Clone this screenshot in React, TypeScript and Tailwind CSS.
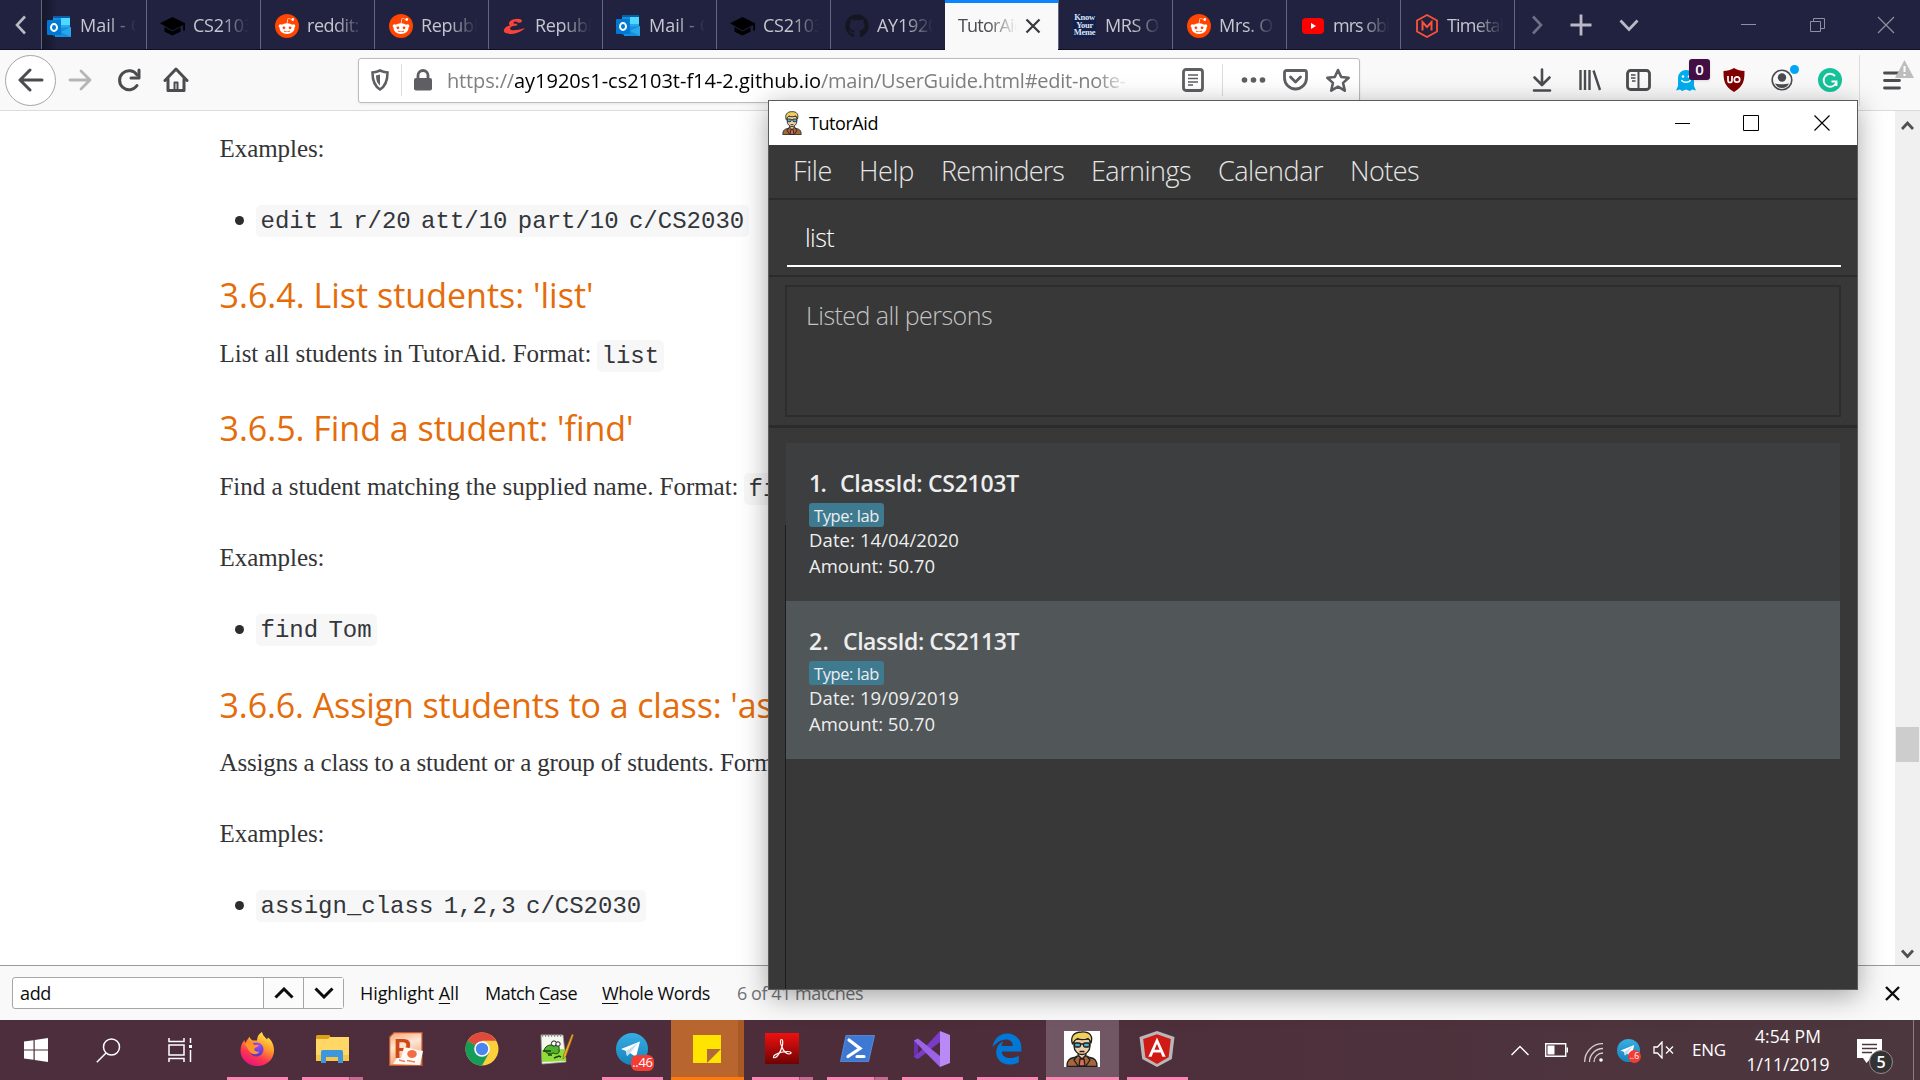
import { useLayoutEffect, useRef, type ReactNode } from "react";
import { FaRedditAlien, FaGithub, FaEdgeLegacy, FaAngular } from "react-icons/fa";

/* Text line whose letter spacing is adjusted so that it spans `w` pixels. */
function Fit({ w, className = "", children }: { w: number; className?: string; children: ReactNode }) {
  const ref = useRef<HTMLSpanElement>(null);
  useLayoutEffect(() => {
    const el = ref.current;
    if (!el) return;
    el.style.letterSpacing = "0px";
    const n = (el.textContent ?? "").length;
    el.style.letterSpacing = `${(w - el.getBoundingClientRect().width) / n}px`;
  }, [w]);
  return (
    <span ref={ref} className={`inline-block whitespace-pre ${className}`}>
      {children}
    </span>
  );
}

function Outlook() {
  return (
    <svg width="25" height="24" viewBox="0 0 25 24">
      <path d="M6 1h17v20H6z" fill="#0a5ea8" />
      <path d="M6 3h8v7H6z" fill="#1490df" />
      <path d="M14 3h9v7h-9z" fill="#50d9ff" />
      <path d="M14 10h9v6h-9z" fill="#28a8ea" />
      <path d="M8 13l16-1v10H8z" fill="#1490df" />
      <path d="M14 17l10-5v10z" fill="#28a8ea" />
      <rect y="5" width="14" height="15" rx="1" fill="#0078d4" />
      <ellipse cx="7" cy="12.5" rx="3" ry="3.4" fill="none" stroke="#fff" strokeWidth="2" />
    </svg>
  );
}

function Reddit() {
  return (
    <span className="flex size-6 items-center justify-center rounded-full bg-[#ff4500]">
      <FaRedditAlien size={18} color="#fff" />
    </span>
  );
}

function Meme() {
  return (
    <span className="flex h-6 w-[23px] flex-col items-center justify-center bg-[#12204c] font-['Liberation_Serif'] text-[8.500px] leading-[7.500px] font-bold tracking-[-0.3px] text-[#dfe3ee]">
      <span>Know</span>
      <span>Your</span>
      <span>Meme</span>
    </span>
  );
}

function YouTube() {
  return (
    <svg width="24" height="24" viewBox="0 0 24 24">
      <rect x="1" y="4" width="22" height="16" rx="4" fill="#f00" />
      <path d="M10 9l5 3-5 3z" fill="#fff" />
    </svg>
  );
}

function NusMods() {
  return (
    <svg width="24" height="24" viewBox="0 0 24 24" fill="none" stroke="#ff5138" strokeWidth="1.800">
      <path d="M12 1l10 5.500v11L12 23 2 17.500v-11z" />
      <path d="M7.500 16.500V8l4.500 5 4.500-5v8.500" strokeWidth="2" />
    </svg>
  );
}

function GradCap() {
  return (
    <svg width="25" height="20" viewBox="0 0 25 20" fill="#000">
      <path d="M12.500 1L25 7.200v7.300h-1.800V9l-10.700 5.600L0 7.200z" />
      <path d="M4.500 11l8 4.600 8-4.400v4.600l-8 3.600-8-3.600z" />
    </svg>
  );
}

function RedScript() {
  return (
    <svg width="23" height="16" viewBox="0 0 23 16" fill="#f9423a">
      <path d="M10 1.500C14 0 19 .5 19 3c0 1.500-2 2-4 1.500C13.500 3 11 3 10.500 4.500c-.3 1.200 1.500 1.500 4 1.200l-1 2c-4-.2-6.500 1-6.500 2.800 0 2.500 6 2.300 15-.5-4 4-10 6-15 6C2.500 16 0 14 1 11.500 2 9 4.500 8 7 7.500 4.500 5.500 6.500 3 10 1.500z" />
    </svg>
  );
}

const tabs: { icon: ReactNode; label: string; w: number }[] = [
  { icon: <GradCap />, label: "CS2103", w: 61 },
  { icon: <Reddit />, label: "reddit: t", w: 62 },
  { icon: <Reddit />, label: "Republ", w: 57 },
  { icon: <RedScript />, label: "Republ", w: 57 },
  { icon: <Outlook />, label: "Mail - C", w: 62 },
  { icon: <GradCap />, label: "CS2103", w: 61 },
  { icon: <FaGithub size={24} color="#15161f" />, label: "AY1920", w: 61 },
];
const tabsAfter: { icon: ReactNode; label: string; w: number }[] = [
  { icon: <Meme />, label: "MRS O", w: 54 },
  { icon: <Reddit />, label: "Mrs. O", w: 54 },
  { icon: <YouTube />, label: "mrs obb", w: 63 },
  { icon: <NusMods />, label: "Timetab", w: 63 },
];

function Tab({ icon, label, w }: { icon: ReactNode; label: string; w: number }) {
  return (
    <div className="flex h-[49px] w-[114px] shrink-0 items-center overflow-hidden border-l border-[#646580] pl-[13px]">
      <div className="flex w-[25px] shrink-0 justify-center pt-0.5">{icon}</div>
      <div className="ml-2 w-[56px] overflow-hidden mask-r-from-50% mask-r-to-100%">
        <Fit w={w} className="text-[18px] leading-[50px] text-[#c6c7d0]">{label}</Fit>
      </div>
    </div>
  );
}

function TabBar() {
  return (
    <div className="flex h-[50px] shrink-0 border-b border-[#0f1020] bg-[#20223f]">
      <div className="flex w-[41px] items-center justify-center">
        <svg width="14" height="20" viewBox="0 0 14 20" fill="none" stroke="#b9bac6" strokeWidth="2.600"><path d="M11 1.500L3 10l8 8.500" /></svg>
      </div>
      <div className="flex w-[105px] items-center border-l border-[#646580] bg-linear-to-r from-[#15172c] to-[#20223f] to-15% pl-[5px]">
        <div className="pt-1"><Outlook /></div>
        <div className="ml-2 w-[56px] overflow-hidden mask-r-from-50% mask-r-to-100%">
          <Fit w={62} className="text-[18px] leading-[50px] text-[#c6c7d0]">Mail - C</Fit>
        </div>
      </div>
      {tabs.map((t, i) => <Tab key={i} {...t} />)}
      <div className="ml-px flex h-[50px] w-[113px] shrink-0 items-center border-t-[3px] border-[#0a84ff] bg-[#f9f9fa] pl-[13px]">
        <div className="w-[59px] overflow-hidden mask-r-from-50% mask-r-to-100%">
          <Fit w={66} className="-mt-[3px] text-[18px] leading-[47px] text-[#4a4a4f]">TutorAid</Fit>
        </div>
        <svg className="-mt-px ml-2" width="16" height="16" viewBox="0 0 16 16" fill="none" stroke="#38383d" strokeWidth="2.200"><path d="M1.500 1.500l13 13M14.500 1.500l-13 13" /></svg>
      </div>
      {tabsAfter.map((t, i) => <Tab key={i} {...t} />)}
      <div className="flex h-[49px] flex-1 items-center border-l border-[#646580] text-[#b9bac6]">
        <svg className="ml-[15px]" width="14" height="20" viewBox="0 0 14 20" fill="none" stroke="#6f7088" strokeWidth="2.600"><path d="M3 1.500L11 10l-8 8.500" /></svg>
        <svg className="ml-[26px]" width="22" height="22" viewBox="0 0 22 22" fill="none" stroke="currentColor" strokeWidth="2.800"><path d="M11 0.500v21M0.500 11h21" /></svg>
        <svg className="ml-[27px]" width="20" height="14" viewBox="0 0 20 14" fill="none" stroke="currentColor" strokeWidth="2.800"><path d="M1.500 2.500L10 11.500l8.500-9" /></svg>
        <svg className="ml-[102px]" width="16" height="16" viewBox="0 0 16 16" stroke="#8f909f"><path d="M0 7.500h15" /></svg>
        <svg className="ml-[53px]" width="16" height="16" viewBox="0 0 16 16" fill="none" stroke="#8f909f"><path d="M.5 4.500h10v10h-10zM3.500 4.500v-3h11v10h-4" /></svg>
        <svg className="ml-[51px]" width="18" height="18" viewBox="0 0 18 18" fill="none" stroke="#8f909f" strokeWidth="1.200"><path d="M1 1l16 16M17 1L1 17" /></svg>
      </div>
    </div>
  );
}

function Toolbar() {
  return (
    <div className="flex h-[61px] shrink-0 items-center border-b border-[#dcdcdd] bg-[#f9f9fa]">
      <div className="ml-[5px] flex size-[51px] shrink-0 items-center justify-center rounded-full border border-[#a5a5a6] bg-white">
        <svg width="26" height="24" viewBox="0 0 26 24" fill="none" stroke="#4c4c50" strokeWidth="3" strokeLinecap="round" strokeLinejoin="round"><path d="M24 12H2M12 2L2 12l10 10" /></svg>
      </div>
      <svg className="ml-3 shrink-0" width="24" height="22" viewBox="0 0 24 22" fill="none" stroke="#b5b5b7" strokeWidth="2.800" strokeLinecap="round" strokeLinejoin="round"><path d="M2 11h20M13 2l9 9-9 9" /></svg>
      <svg className="ml-[25px] shrink-0" width="24" height="24" viewBox="0 0 24 24" fill="none" stroke="#4c4c50" strokeWidth="3" strokeLinecap="round"><path d="M20 17.500A9.500 9.500 0 1 1 20 7" /><path d="M22 2v8h-8" strokeLinejoin="round" /></svg>
      <svg className="ml-[22px] shrink-0" width="26" height="26" viewBox="0 0 26 26" fill="none" stroke="#4c4c50" strokeWidth="3" strokeLinecap="round" strokeLinejoin="round"><path d="M2 13.500L13 2l11 11.500" /><path d="M5 12v11.500h16V12" /><path d="M11.500 22v-6.500h3V22" strokeWidth="2" /></svg>
      <div className="ml-[169px] flex h-[45px] w-[1002px] shrink-0 items-center rounded-[3px] border border-[#bcbcbd] bg-white text-[#808084] shadow-[0_1px_3px_rgba(0,0,0,0.08)]">
        <svg className="ml-3" width="18" height="22" viewBox="0 0 18 22" fill="none" stroke="#5f5f63" strokeWidth="2.600"><path d="M9 1.500c2.500 1.200 5 1.700 7.500 2 0 7-1 13-7.500 17C2.500 16.500 1.500 10.500 1.500 3.500 4 3.200 6.500 2.700 9 1.500z" /><path d="M9 5.500v11c-3-2.500-3.800-5-4-10z" fill="#5f5f63" stroke="none" /></svg>
        <div className="ml-3 h-8 w-px bg-[#dcdcdd]" />
        <svg className="ml-3" width="18" height="22" viewBox="0 0 18 22"><rect y="9" width="18" height="12.500" rx="2" fill="#5f5f63" /><path d="M4 10V6.500a5 5 0 0 1 10 0V10" fill="none" stroke="#5f5f63" strokeWidth="2.800" /></svg>
        <div className="ml-[15px] flex w-[682px] pt-px text-[20px] leading-[42px] mask-r-from-[650px] mask-r-to-[682px]">
          <Fit w={67}>https://</Fit>
          <Fit w={307} className="text-black">ay1920s1-cs2103t-f14-2.github.io</Fit>
          <Fit w={305}>/main/UserGuide.html#edit-note-</Fit>
        </div>
        <svg className="ml-[53px]" width="22" height="24" viewBox="0 0 22 24" fill="none" stroke="#5f5f63"><rect x="1.500" y="1.500" width="19" height="21" rx="2.500" strokeWidth="2.800" /><path d="M6 7h10M6 10.500h10M6 14h10M6 17h5" strokeWidth="1.600" /></svg>
        <div className="ml-[18px] h-8 w-px bg-[#dcdcdd]" />
        <svg className="ml-[18px]" width="26" height="6" viewBox="0 0 26 6" fill="#5f5f63"><circle cx="3.500" cy="3" r="2.800" /><circle cx="12.500" cy="3" r="2.800" /><circle cx="21.500" cy="3" r="2.800" /></svg>
        <svg className="ml-4" width="25" height="22" viewBox="0 0 25 22" fill="none" stroke="#5f5f63" strokeWidth="2.800" strokeLinecap="round" strokeLinejoin="round"><path d="M3.500 1.500h18a2 2 0 0 1 2 2V9a11 11 0 0 1-22 0V3.500a2 2 0 0 1 2-2z" /><path d="M7.500 8l5 5 5-5" /></svg>
        <svg className="ml-[17px]" width="26" height="25" viewBox="0 0 26 25" fill="none" stroke="#5f5f63" strokeWidth="2.600" strokeLinejoin="round"><path d="M13 2l3.200 7 7.500.8-5.600 5.100 1.700 7.800L13 18.700l-6.800 4 1.700-7.800L2.300 9.800l7.500-.8z" /></svg>
      </div>
      <div className="ml-[158px] flex items-center text-[#4c4c50]">
        <div className="flex w-12 justify-center"><svg width="20" height="24" viewBox="0 0 20 24" fill="none" stroke="currentColor" strokeWidth="2.600" strokeLinecap="round" strokeLinejoin="round"><path d="M10 1.500v15M2.500 9.500L10 17l7.500-7.500M2 22.500h16" /></svg></div>
        <div className="flex w-12 justify-center"><svg width="24" height="22" viewBox="0 0 24 22" fill="none" stroke="currentColor" strokeWidth="2.400"><path d="M2.500 1v20M7 1v20M11.500 1v20M15.500 1.500L22 21" /></svg></div>
        <div className="flex w-12 justify-center"><svg width="25" height="22" viewBox="0 0 25 22" fill="none" stroke="currentColor" strokeWidth="2.800"><rect x="1.500" y="1.500" width="22" height="19" rx="3" /><path d="M12.500 2v18" strokeWidth="2" /><path d="M5 6h4.500M5 9h4.500M6 12h3.500" strokeWidth="1.600" /></svg></div>
        <div className="relative flex w-12 justify-center">
          <svg width="20" height="22" viewBox="0 0 20 22"><path d="M2 9a8 8 0 0 1 16 0v8l2 4.500-4-1-2 1.500-4-1.500L6 22l-2-1.500-4 1 2-4.500z" fill="#00aef0" /><circle cx="7" cy="7.500" r="1.300" fill="#fff" /><circle cx="13" cy="7.500" r="1.300" fill="#fff" /><path d="M5.500 11c1.500 3 7.500 3 9 0" stroke="#fff" strokeWidth="1.500" fill="none" /></svg>
          <span className="absolute -top-[10px] left-[27px] flex h-[21px] w-[21px] items-center justify-center rounded-[3px] bg-[#440f45] text-[15px] leading-none font-semibold text-white shadow">0</span>
        </div>
        <div className="flex w-12 justify-center">
          <svg width="22" height="24" viewBox="0 0 22 24"><path d="M11 0c3 2 7 3 10.500 3 0 9-.5 15-10.500 21C1 18 .5 12 .5 3 4 3 8 2 11 0z" fill="#800000" /><path d="M5 8v4.500a1.800 1.800 0 0 0 4 0V8" fill="none" stroke="#fff" strokeWidth="1.700" /><circle cx="14" cy="11.500" r="2.700" fill="none" stroke="#fff" strokeWidth="1.700" /></svg>
        </div>
        <div className="relative flex w-12 justify-center">
          <svg width="22" height="22" viewBox="0 0 22 22" fill="none"><circle cx="11" cy="11" r="9.800" stroke="currentColor" strokeWidth="1.600" /><circle cx="11" cy="8.500" r="4.200" fill="currentColor" /><path d="M4 14.500c4 1 10 1 14 0-1.500 3-4 4.500-7 4.500s-5.500-1.500-7-4.500z" fill="currentColor" /></svg>
          <span className="absolute -top-1 left-8 size-[9px] rounded-full bg-[#00a5f5]" />
        </div>
        <div className="flex w-12 justify-center">
          <svg width="24" height="24" viewBox="0 0 24 24" fill="none"><circle cx="12" cy="12" r="12" fill="#15c39a" /><path d="M17 8a6.500 6.500 0 1 0 1.500 5.500M13.500 13.500h5V18" stroke="#fff" strokeWidth="1.900" /></svg>
        </div>
      </div>
      <div className="ml-[5px] h-[51px] w-px bg-[#dcdcdd]" />
      <div className="relative ml-[23px] text-[#4c4c50]">
        <svg width="18" height="19" viewBox="0 0 18 19" stroke="currentColor" strokeWidth="2.800" strokeLinecap="round"><path d="M1.500 2h15M1.500 9.500h15M1.500 17h15" /></svg>
        <svg className="absolute -top-[11px] left-3" width="19" height="18" viewBox="0 0 19 18"><path d="M9.500 0L19 18H0z" fill="#bdbdbe" /><path d="M9.500 6v6M9.500 14v2" stroke="#fff" strokeWidth="2" /></svg>
      </div>
    </div>
  );
}

function Code({ children, className = "" }: { children: string; className?: string }) {
  return (
    <code className={`rounded-[5px] bg-[#f7f7f8] px-[5px] py-[2.500px] font-['Liberation_Mono',monospace] text-[24px] text-[#33363a] [word-spacing:-0.17em] ${className}`}>
      {children}
    </code>
  );
}

function Para({ w, children, code, className = "" }: { w: number; children: string; code?: string; className?: string }) {
  return (
    <p className={`h-10 leading-10 whitespace-nowrap ${className}`}>
      <Fit w={w}>{children}</Fit>
      {code && <Code className="ml-[5px]">{code}</Code>}
    </p>
  );
}

function Bullet({ children, className = "" }: { children: string; className?: string }) {
  return (
    <div className={`h-10 leading-10 whitespace-nowrap ${className}`}>
      <span className="mr-[12px] mb-[2px] ml-[15px] inline-block size-[9px] rounded-full bg-[#2b2d30]" />
      <Code>{children}</Code>
    </div>
  );
}

function Heading({ w, children, className = "" }: { w: number; children: string; className?: string }) {
  return (
    <h3 className={`h-12 font-['Open_Sans',sans-serif] text-[34px] leading-[48px] whitespace-nowrap text-[#e46c0a] ${className}`}>
      <Fit w={w}>{children}</Fit>
    </h3>
  );
}

function Guide() {
  return (
    <div className="flex min-h-0 flex-1 bg-white">
      <div className="w-[770px] overflow-hidden pl-[219.500px] font-['Liberation_Serif',serif] text-[25px] text-[#333436]">
        <Para w={105} className="mt-[18px]">Examples:</Para>
        <Bullet className="mt-[30px]">edit 1 r/20 att/10 part/10 c/CS2030</Bullet>
        <Heading w={374} className="mt-[32px]">3.6.4. List students: 'list'</Heading>
        <Para w={372} code="list" className="mt-[15px]">List all students in TutorAid. Format:</Para>
        <Heading w={414} className="mt-[30px]">3.6.5. Find a student: 'find'</Heading>
        <Para w={519} code="find" className="mt-[15px]">Find a student matching the supplied name. Format:</Para>
        <Para w={105} className="mt-[31px]">Examples:</Para>
        <Bullet className="mt-[30px]">find Tom</Bullet>
        <Heading w={553} className="mt-[33px]">3.6.6. Assign students to a class: 'as</Heading>
        <Para w={554} className="mt-[14px]">Assigns a class to a student or a group of students. Form</Para>
        <Para w={105} className="mt-[31px]">Examples:</Para>
        <Bullet className="mt-[30px]">assign_class 1,2,3 c/CS2030</Bullet>
      </div>
      <div className="ml-auto flex w-[25px] flex-col items-center bg-[#f0f0f0] pt-[9px] pb-[5px]">
        <svg width="13" height="12" viewBox="0 0 13 12" fill="none" stroke="#505050" strokeWidth="2.800"><path d="M1 9L6.500 3 12 9" /></svg>
        <div className="mt-[595px] h-[35px] w-[23px] bg-[#cdcdcd]" />
        <svg className="mt-auto" width="13" height="12" viewBox="0 0 13 12" fill="none" stroke="#505050" strokeWidth="2.800"><path d="M1 2.500L6.500 8.500 12 2.500" /></svg>
      </div>
    </div>
  );
}

function FindBar() {
  return (
    <div className="flex h-[55px] shrink-0 items-center border-t border-[#9b9b9b] bg-[#f9f9fa] text-[18px] text-[#0c0c0d]">
      <div className="ml-3 flex h-8 w-[332px] items-stretch rounded-[3px] border border-[#a6a6a7] bg-white">
        <div className="flex w-[250px] items-center pl-[7px]"><Fit w={31}>add</Fit></div>
        <div className="flex w-10 items-center justify-center border-l border-[#a6a6a7] bg-[#fbfbfb]"><svg width="20" height="12" viewBox="0 0 20 12" fill="none" stroke="#0c0c0d" strokeWidth="3"><path d="M1.500 10.500L10 2l8.500 8.500" /></svg></div>
        <div className="flex flex-1 items-center justify-center border-l border-[#a6a6a7] bg-[#fbfbfb]"><svg width="20" height="12" viewBox="0 0 20 12" fill="none" stroke="#0c0c0d" strokeWidth="3"><path d="M1.500 1.500L10 10l8.500-8.500" /></svg></div>
      </div>
      <Fit w={99} className="ml-[16px]">Highlight <u className="underline-offset-[3px]">A</u>ll</Fit>
      <Fit w={92} className="ml-[26px]">Match <u className="underline-offset-[3px]">C</u>ase</Fit>
      <Fit w={108} className="ml-[25px]"><u className="underline-offset-[3px]">W</u>hole Words</Fit>
      <Fit w={126} className="ml-[27px] text-[#737375]">6 of 41 matches</Fit>
      <svg className="mr-5 ml-auto" width="15" height="15" viewBox="0 0 15 15" stroke="#0c0c0d" strokeWidth="2.400"><path d="M1 1l13 13M14 1L1 14" /></svg>
    </div>
  );
}

function Tutor({ width, height }: { width: number; height: number }) {
  return (
    <svg width={width} height={height} viewBox="0 0 36 36" stroke="#1d1d1d" strokeWidth="1.300" strokeLinejoin="round" preserveAspectRatio="none">
      <path d="M3 35.500c0-6 2-8 7-9l5-2h6l5 2c5 1 7 3 7 9z" fill="#a5673a" />
      <path d="M14 24l4 4 4-4-1-4h-6z" fill="#f2cfa6" />
      <path d="M16 28h4l1 7h-6z" fill="#e0695a" />
      <path d="M13 25l-3 4 4 6M23 25l3 4-4 6" fill="none" />
      <path d="M10 8v7c0 5 4 8.500 8 8.500s8-3.500 8-8.500V8z" fill="#f2cfa6" />
      <path d="M8.500 13c-2.500-7 1-12 9-12 9-.5 11.500 4.500 9.500 11-1-3-2-4-3-4.500-4 1.500-8 1.500-10.500 0-2 1-4 2.500-5 5.500z" fill="#f0cf5f" />
      <rect x="10.500" y="12" width="6" height="4" rx="1.500" fill="#3fb8cf" />
      <rect x="19.500" y="12" width="6" height="4" rx="1.500" fill="#3fb8cf" />
      <path d="M16.500 13h3M15.500 20.500h5" />
    </svg>
  );
}

function ClassCard({ index, id, idW, date, className }: { index: string; id: string; idW: number; date: string; className: string }) {
  return (
    <div className={`h-[158px] pt-[23px] pl-[23px] text-[#eeeeee] ${className}`}>
      <div className="flex h-[34px] text-[23px] leading-[34px] font-semibold">
        <Fit w={index === "1." ? 16 : 20}>{index}</Fit>
        <Fit w={idW} className={index === "1." ? "ml-[15px]" : "ml-[14px]"}>{id}</Fit>
      </div>
      <div className="mt-[3px] flex h-6 w-[75px] items-center justify-center rounded-[3px] bg-[#3e7b91] pt-[3px] text-[16.500px]">
        <Fit w={65}>Type: lab</Fit>
      </div>
      <div className="h-[26px] pt-px text-[18.500px] leading-[24px]"><Fit w={150}>{date}</Fit></div>
      <div className="h-[26px] pt-px text-[18.500px] leading-[24px]"><Fit w={126}>Amount: 50.70</Fit></div>
    </div>
  );
}

const menus = [
  { label: "File", w: 39 },
  { label: "Help", w: 55 },
  { label: "Reminders", w: 123 },
  { label: "Earnings", w: 100 },
  { label: "Calendar", w: 105 },
  { label: "Notes", w: 69 },
];

function TutorAidWindow() {
  return (
    <div className="absolute top-[100px] left-[768px] flex h-[890px] w-[1090px] flex-col border border-[#5b5b5b] bg-[#383838] shadow-[0_6px_26px_rgba(0,0,0,0.35)]">
      <div className="flex h-11 shrink-0 items-center bg-white text-black">
        <div className="ml-[12px]"><Tutor width={22} height={24} /></div>
        <Fit w={69} className="ml-[6px] text-[18px]">TutorAid</Fit>
        <svg className="mr-[53px] ml-auto" width="15" height="15" viewBox="0 0 15 15" stroke="#000"><path d="M0 7.500h15" /></svg>
        <svg className="mr-[55px]" width="16" height="16" viewBox="0 0 16 16" fill="none" stroke="#000"><path d="M.5.500h15v15H.5z" /></svg>
        <svg className="mr-[27px]" width="16" height="16" viewBox="0 0 16 16" stroke="#000" strokeWidth="1.200"><path d="M.5.500l15 15M15.500.500l-15 15" /></svg>
      </div>
      <div className="flex h-[53px] shrink-0 gap-[27px] pl-[24px] text-[27px] leading-[52px] font-light text-[#e6e6e6]">
        {menus.map((m) => <Fit key={m.label} w={m.w}>{m.label}</Fit>)}
      </div>
      <div className="h-[77px] shrink-0 border-t-2 border-[#2c2c2c] pt-[14px] pr-[16px] pl-[18px]">
        <div className="h-[53px] border-b-2 border-white pl-[18px] text-[25px] leading-[46px] font-light text-white">
          <Fit w={29}>list</Fit>
        </div>
      </div>
      <div className="h-[150px] shrink-0 border-t-2 border-[#2b2b2b] px-[16px] pt-[8px]">
        <div className="h-[132px] border-2 border-[#2d2d2d] pt-[8px] pl-[19px] text-[25px] leading-[40px] font-light text-[#c4c4c4]">
          <Fit w={186}>Listed all persons</Fit>
        </div>
      </div>
      <div className="flex min-h-0 flex-1 border-t-[3px] border-[#2b2b2b]">
        <div className="mt-[97px] ml-4 w-px bg-[#1d1d1d]" />
        <div className="mt-[15px] mr-[17px] flex-1">
          <ClassCard index="1." id="ClassId: CS2103T" idW={179} date="Date: 14/04/2020" className="bg-[#3c3e3f]" />
          <ClassCard index="2." id="ClassId: CS2113T" idW={176} date="Date: 19/09/2019" className="bg-[#515658]" />
        </div>
      </div>
    </div>
  );
}

function Firefox() {
  return (
    <svg width="34" height="34" viewBox="0 0 34 34">
      <defs>
        <linearGradient id="fx" x1="0.800" y1="0" x2="0.300" y2="1"><stop offset="0" stopColor="#fff44f" /><stop offset="0.400" stopColor="#ff9a2a" /><stop offset="0.700" stopColor="#ff3750" /><stop offset="1" stopColor="#e5137f" /></linearGradient>
        <radialGradient id="fp" cx="0.600" cy="0.200" r="0.800"><stop offset="0" stopColor="#a04bff" /><stop offset="1" stopColor="#4a3bc4" /></radialGradient>
      </defs>
      <path d="M22 0c1 4 3 5 5 7.500l1-2c4 3 6 8 6 13C34 27 27 34 17.500 34S.5 27 .5 19c0-5 1.500-8 4-11 0 1.500.5 2 1 3 1-3 3-4.500 4-6.500.5 2 2 3.500 3.500 4h4c0-4 2-7 5-8.500z" fill="url(#fx)" />
      <circle cx="16.500" cy="17.500" r="7" fill="url(#fp)" />
      <path d="M5 12c4-3 8-1 9 1h5c-1 2-4 2.500-4.500 3.500-1 2 2 4 5 3-1 3-7 4-10 0-2-2.500-2.500-5-4.500-7.500z" fill="#ff9428" />
    </svg>
  );
}

function Explorer() {
  return (
    <svg width="33" height="28" viewBox="0 0 33 28">
      <path d="M0 1.500A1.500 1.500 0 0 1 1.500 0h12L15 3l-2 3H0z" fill="#e0a015" />
      <path d="M0 4h12l2-2h19v24H0z" fill="#ffd767" />
      <path d="M0 20h33v6H0z" fill="#f6c64b" />
      <path d="M5 28V17a2 2 0 0 1 2-2h18a2 2 0 0 1 2 2v11h-5v-6H10v6z" fill="#3d97dd" />
    </svg>
  );
}

function PowerPoint() {
  return (
    <svg width="35" height="34" viewBox="0 0 35 34">
      <defs><linearGradient id="pp" x2="0.300" y2="1"><stop stopColor="#f5a878" /><stop offset="0.450" stopColor="#fde6d6" /><stop offset="1" stopColor="#f4a06c" /></linearGradient></defs>
      <path d="M5 .7h28v32.600H.7V5z" fill="url(#pp)" stroke="#c9562a" strokeWidth="1.200" />
      <text x="5" y="26" fontSize="28" fontWeight="bold" fontFamily="Liberation Sans" fill="#cf4a12" textLength="17" lengthAdjust="spacingAndGlyphs">P</text>
      <path d="M15 15l19 4-3 14-27-1 4-6h4z" fill="#fffaf6" />
      <ellipse cx="23" cy="22" rx="4.800" ry="4" fill="#ee6f45" />
      <path d="M10 28l6 1.500M18 28.500l8 1.500" stroke="#e9855c" strokeWidth="1.500" />
    </svg>
  );
}

function Chrome() {
  return (
    <svg width="34" height="34" viewBox="0 0 34 34">
      <circle cx="17" cy="17" r="16.500" fill="#fdd03b" />
      <path d="M17 17L2.700 8.700A16.500 16.500 0 0 1 31.300 8.700H17z" fill="#df4a3c" />
      <path d="M2.700 8.700A16.500 16.500 0 0 0 17 33.500L24 21l-7-4z" fill="#169c59" />
      <circle cx="17" cy="17" r="7.800" fill="#fff" />
      <circle cx="17" cy="17" r="6.200" fill="#4a86ee" />
    </svg>
  );
}

function NotepadPP() {
  return (
    <svg width="34" height="32" viewBox="0 0 34 32">
      <path d="M1 2h22l3 27-24 2z" fill="#f5f8ec" stroke="#999" strokeWidth="0.800" />
      <path d="M2 17l23-1 1 12-24 1z" fill="#8fdc3a" />
      <path d="M2 2.500h21" stroke="#888" strokeWidth="2.500" strokeDasharray="1.200 1.800" />
      <path d="M4 17c2-5 7-6 10-4 3-3 6 0 5 4 1 3-2 5-6 3-4 2-7 0-9-3z" fill="#4fb52c" stroke="#1c3c12" />
      <circle cx="14" cy="10.500" r="2.600" fill="#fff" stroke="#222" />
      <circle cx="18" cy="11" r="2.200" fill="#fff" stroke="#222" />
      <path d="M3 18l8 0M8 22l4 0M14 25l5-2 2 1" stroke="#1c3c12" strokeWidth="1.500" fill="none" />
      <path d="M32 1l1.500 1L26 23l-3 3 .5-4z" fill="#f0ac28" stroke="#8a5a12" strokeWidth="0.600" />
    </svg>
  );
}

function Plane({ size }: { size: number }) {
  return (
    <svg width={size} height={size} viewBox="0 0 32 32">
      <defs><linearGradient id="tg" x2="0" y2="1"><stop stopColor="#37aee2" /><stop offset="1" stopColor="#1583bd" /></linearGradient></defs>
      <circle cx="16" cy="16" r="16" fill="url(#tg)" />
      <path d="M5 16l19-7.500-4 15.500-6-4-3 3-1-5z" fill="#fff" />
      <path d="M10 18l12-8-8 10-3 3z" fill="#c4dcec" />
    </svg>
  );
}

function Telegram() {
  return (
    <div className="relative">
      <Plane size={32} />
      <span className="absolute top-[22px] left-[15px] flex h-[16px] w-[23px] items-center justify-center rounded-[6px] bg-[#f23c34] text-[13px] leading-none tracking-[-0.3px] text-white">..46</span>
    </div>
  );
}

function Sticky() {
  return <svg width="28" height="28" viewBox="0 0 28 28"><path d="M0 0h28v28H0z" fill="#ffe400" /><path d="M28 14L14 28V14z" fill="#b0693a" /></svg>;
}

function Acrobat() {
  return (
    <svg width="34" height="32" viewBox="0 0 34 32">
      <defs><linearGradient id="ac" x2="0" y2="1"><stop stopColor="#f01010" /><stop offset="1" stopColor="#6f0303" /></linearGradient></defs>
      <rect width="34" height="31" fill="url(#ac)" />
      <path d="M17 14c-2.500-5-1.500-7.500-.5-7.500s2 2 .5 7.500c-1.500 4.500-4 9-6.500 10.500-2.500 1-3-1 0-3 3-1.700 8-3 12-3 4.500 0 4.500 2.500 1.500 2.500-3-.2-6-3.500-7-7z" fill="none" stroke="#fff" strokeWidth="1.200" />
    </svg>
  );
}

function PowerShell() {
  return (
    <svg width="35" height="27" viewBox="0 0 35 27">
      <path d="M6 0.400h28.500l-6 26.200H.5z" fill="#3d78d2" stroke="#5f97ea" strokeWidth="0.800" />
      <path d="M9 5l11 8.500L8 21.500M17 21.500h7" fill="none" stroke="#fff" strokeWidth="3.200" strokeLinecap="round" />
    </svg>
  );
}

function VisualStudio() {
  return (
    <svg width="36" height="36" viewBox="0 0 36 36">
      <path d="M0 9.500l4-2V28l-4-2z" fill="#6a32b3" />
      <path d="M0 26L4 28 26 11V0L14 13z" fill="#7a3cc8" />
      <path d="M0 9.500l4-2L26 25v11L11 21z" fill="#9b62e6" />
      <path d="M26 0l10 4v28l-10 4z" fill="#b98af5" />
    </svg>
  );
}

/* The icon's letter is a cut-out, so the white shape behind it shows through. */
function Angular() {
  return (
    <div className="relative flex size-9 items-center justify-center">
      <svg width="36" height="36" viewBox="0 0 36 36">
        <path d="M18 0l17.500 6-2.700 22L18 36 3.200 28 .5 6z" fill="#b8b8b8" />
        <path d="M9 6h18v22H9z" fill="#fff" />
      </svg>
      <FaAngular className="absolute top-px left-0" size={34} style={{ width: 36 }} color="#d01a16" />
    </div>
  );
}

type TaskItem = { icon: ReactNode; bar?: "single" | "stack" | "full" | "alert" };
const apps: TaskItem[] = [
  { icon: <Firefox />, bar: "single" },
  { icon: <Explorer />, bar: "stack" },
  { icon: <span className="block pr-0.5"><PowerPoint /></span> },
  { icon: <Chrome /> },
  { icon: <NotepadPP /> },
  { icon: <Telegram />, bar: "single" },
  { icon: <Sticky />, bar: "alert" },
  { icon: <Acrobat />, bar: "stack" },
  { icon: <PowerShell />, bar: "stack" },
  { icon: <VisualStudio />, bar: "single" },
  { icon: <FaEdgeLegacy size={32} color="#0078d7" />, bar: "single" },
  { icon: <span className="block bg-white"><Tutor width={36} height={36} /></span>, bar: "full" },
  { icon: <Angular />, bar: "single" },
];

function TaskApp({ icon, bar }: TaskItem) {
  const bg = bar === "alert" ? "bg-[#b86530] border-r-[6px] border-[#a85a26]" : bar === "full" ? "bg-[#715764]" : "";
  return (
    <div className="flex w-[75px] shrink-0 flex-col items-center">
      <div className={`flex h-[57px] w-[73px] items-center justify-center ${bg}`}>
        <div className={bar === "alert" ? "ml-1" : "pr-px"}>{icon}</div>
      </div>
      {bar === "single" && <div className="h-[3px] w-[61px] bg-[#fb86b6]" />}
      {bar === "full" && <div className="h-[3px] w-[73px] bg-[#fb86b6]" />}
      {bar === "alert" && <div className="h-[3px] w-[73px] bg-[#ff7a0a]" />}
      {bar === "stack" && <div className="flex h-[3px] w-[61px]"><div className="w-[47px] bg-[#fb86b6]" /><div className="w-px bg-[#9b5273]" /><div className="flex-1 bg-[#c76a92]" /></div>}
    </div>
  );
}

function Taskbar() {
  return (
    <div className="flex h-[60px] shrink-0 bg-linear-to-r from-[#4d2e3c] via-[#4e2d3b] to-[#4c373e] text-white">
      <div className="flex w-[72px] items-center justify-center">
        <svg width="24" height="24" viewBox="0 0 24 24" fill="#fff"><path d="M0 3.500l9.500-1.300v9.300H0zM10.700 2L24 0v11.500H10.700zM0 12.500h9.500v9.300L0 20.500zM10.700 12.500H24V24l-13.300-2z" /></svg>
      </div>
      <div className="flex w-[72px] items-center justify-center">
        <svg width="25" height="25" viewBox="0 0 25 25" fill="none" stroke="#fff" strokeWidth="1.500"><circle cx="15.500" cy="9" r="8" /><path d="M10 15L.8 24.300" /></svg>
      </div>
      <div className="flex w-[76px] items-center justify-center pr-1">
        <svg width="25" height="24" viewBox="0 0 25 24" fill="none" stroke="#fff" strokeWidth="1.500"><path d="M1 0v3.500h15V0M1 24v-3.500h15V24M1 7h15v10H1zM22.500 0v5M22.500 12v12" /><path d="M21 7h3v3h-3z" fill="#fff" stroke="none" /></svg>
      </div>
      {apps.map((a, i) => <TaskApp key={i} {...a} />)}
      <div className="ml-auto flex items-center">
        <svg width="18" height="11" viewBox="0 0 18 11" fill="none" stroke="#fff" strokeWidth="1.500"><path d="M.5 10L9 1.500l8.500 8.500" /></svg>
        <svg className="ml-4" width="23" height="14" viewBox="0 0 23 14" fill="none"><path d="M.7.700h20v12.600h-20z" stroke="#fff" strokeWidth="1.400" /><path d="M2.500 2.500h7v9h-7zM21.500 4.500h1.500v5h-1.500z" fill="#fff" /></svg>
        <svg className="mt-1 ml-4" width="20" height="19" viewBox="0 0 20 19" fill="none" stroke="#d8cfd2" strokeWidth="1.300"><path d="M.7 19A18 18 0 0 1 19 .7M5.500 19A13.500 13.500 0 0 1 19 5.500M10 19a9 9 0 0 1 9-9" /><circle cx="17" cy="17" r="1.800" fill="#fff" stroke="none" /></svg>
        <div className="relative ml-[13px]">
          <Plane size={23} />
          <span className="absolute top-[11px] left-[11px] flex h-[13px] w-[13px] items-center justify-center rounded-full bg-[#f23c34] text-[8.500px] leading-none">..6</span>
        </div>
        <svg className="ml-[13px]" width="22" height="18" viewBox="0 0 22 18" fill="none" stroke="#fff" strokeWidth="1.300"><path d="M1 6h3.500L9 1v16l-4.500-5H1zM13 5.500l7 7M20 5.500l-7 7" /></svg>
        <Fit w={34} className="ml-[17px] text-[17px]">ENG</Fit>
        <div className="ml-[20px] flex w-[84px] flex-col items-center text-[17.500px] leading-7">
          <Fit w={66}>4:54 PM</Fit>
          <Fit w={83}>1/11/2019</Fit>
        </div>
        <div className="relative mt-0.5 ml-[27px]">
          <svg width="25" height="24" viewBox="0 0 25 24"><path d="M0 0h25v19H14l-4.500 5L6 19H0z" fill="#fff" /><path d="M5 5.500h15M5 9.500h15M5 13.500h10" stroke="#4c373e" strokeWidth="1.300" /></svg>
          <span className="absolute top-[11px] left-[12px] flex size-6 items-center justify-center rounded-full border border-[#98898f] bg-[#333336] text-[16px] leading-none font-semibold">5</span>
        </div>
        <div className="mr-[6px] ml-[31px] h-[60px] w-px bg-[#8d7d83]" />
      </div>
    </div>
  );
}

export default function App() {
  return (
    <div className="relative flex h-[1080px] w-[1920px] flex-col overflow-hidden bg-white font-['Open_Sans','Noto_Sans',sans-serif]">
      <TabBar />
      <Toolbar />
      <Guide />
      <FindBar />
      <Taskbar />
      <TutorAidWindow />
    </div>
  );
}
